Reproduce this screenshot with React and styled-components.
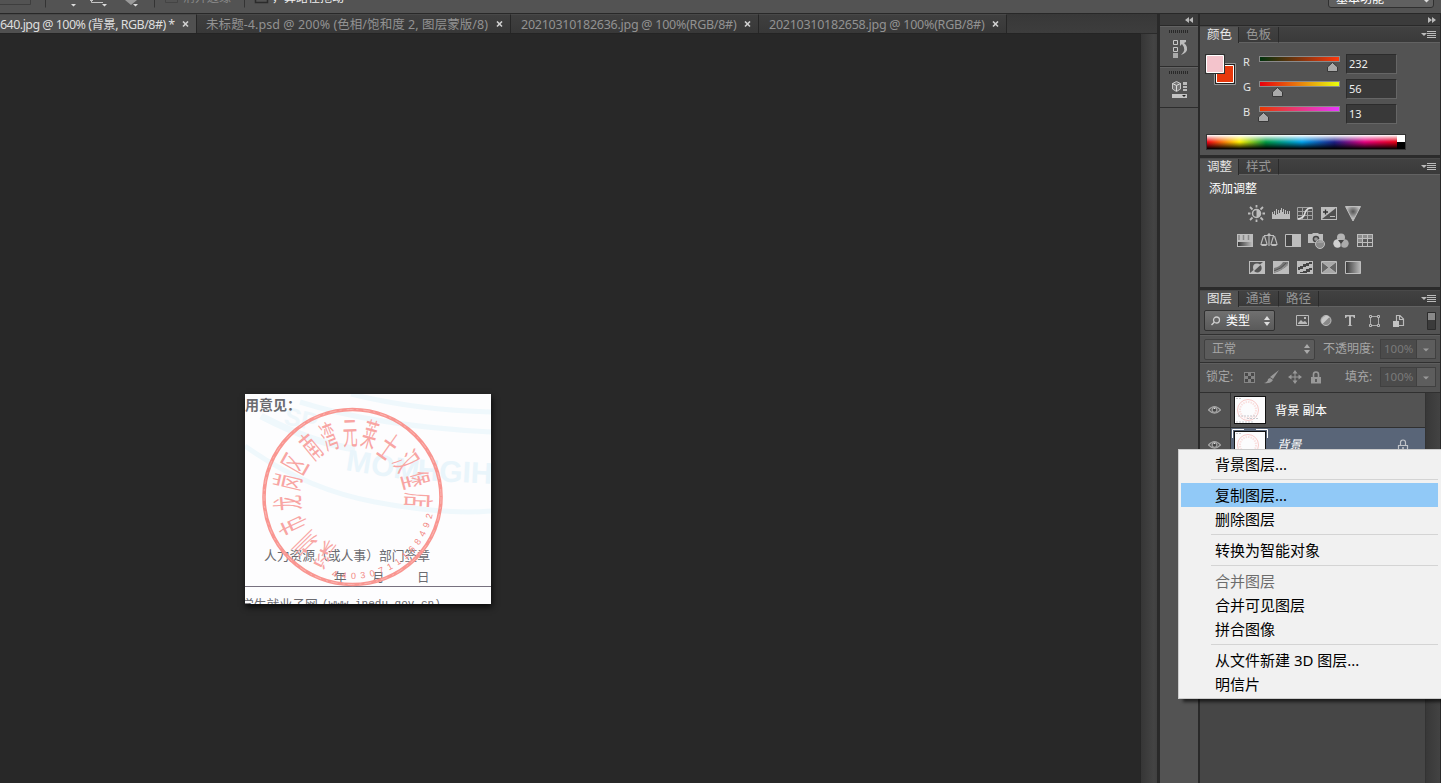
import React from "react";
import styled, { createGlobalStyle, css } from "styled-components";

const Global = createGlobalStyle`
  * { box-sizing: border-box; }
  body { margin: 0; background: #282828; overflow: hidden; font-family: "Noto Sans", "Noto Sans CJK SC", sans-serif; }
  svg { display: block; flex: none; }
`;

const App_ = styled.div`
  width: 1441px; height: 783px; overflow: hidden; position: relative;
  display: flex; flex-direction: column; background: #282828; white-space: nowrap;
`;
const OptionsBar = styled.div`
  height: 14px; flex: none; background: #535353; border-bottom: 1px solid #282828; overflow: hidden;
`;
const Workspace = styled.div`flex: 1; display: flex; min-height: 0;`;
const DocumentArea = styled.div`width: 1157px; display: flex; flex-direction: column;`;
const TabBar = styled.div`
  height: 19px; display: flex; background: linear-gradient(#383838, #3d3d3d);
`;
const DocTab = styled.div`
  width: ${(p) => p.$w}px; height: 19px; display: flex; align-items: center; justify-content: space-between;
  padding: 1px 7px 0 ${(p) => p.$pl}px; border-right: 1px solid #262626; border-top: 1px solid #484848;
  font-size: 12.5px; line-height: 16px; letter-spacing: ${(p) => p.$ls}px;
  color: ${(p) => (p.$active ? "#dedede" : "#929292")};
  background: ${(p) => (p.$active ? "#505050" : "linear-gradient(#3f3f3f,#383838)")};
`;
const Stage = styled.div`flex: 1; display: flex; min-height: 0;`;
const Canvas = styled.div`
  width: 1140px; background: #282828; padding: 360px 0 0 245px; border-top: 1px solid #242424;
  & > svg { box-shadow: 1px 3px 6px #0b0b0b; }
`;
const ScrollTrack = styled.div`
  width: 17px; background: linear-gradient(90deg, #363636, #444 80%, #404040); border-left: 1px solid #262626; border-top: 1px solid #2a2a2a;
`;
const IconDock = styled.div`
  width: 41px; background: #535353; border-left: 3px solid #292929; display: flex; flex-direction: column;
`;
const DockHeader = styled.div`
  height: 12px; flex: none; background: #3b3b3b; border-bottom: 1px solid #292929; display: flex; align-items: center;
  justify-content: flex-end; padding-right: ${(p) => p.$pr}px;
`;
const DockButton = styled.div`
  height: 41px; border-bottom: 1px solid #2d2d2d; border-top: 1px solid #626262; padding: 2px 0 0 8px;
`;
const Panels = styled.div`
  width: 243px; border-left: 2px solid #292929; border-right: 1px solid #292929; display: flex; flex-direction: column; background: #535353;
`;
const Panel = styled.div`
  height: 132px; flex: none; border-bottom: 3px solid #2b2b2b; display: flex; flex-direction: column; overflow: hidden;
`;
const PanelTabs = styled.div`
  height: 17px; flex: none; display: flex; background: linear-gradient(#414141, #393939); border-top: 1px solid #494949;
`;
const PanelTab = styled.div`
  width: ${(p) => p.$w || 39}px; padding-left: 7px; font-size: 12.5px; line-height: 15px; height: 16px;
  color: ${(p) => (p.$active ? "#e6e6e6" : "#969696")};
  background: ${(p) => (p.$active ? "#535353" : "transparent")};
  border-right: 1px solid #2a2a2a;
  border-bottom: ${(p) => (p.$active ? "0" : "1px solid #626262")};
`;
const TabFill = styled.div`flex: 1; border-bottom: 1px solid #626262; padding: 3px 4px 0 0; display: flex; justify-content: flex-end;`;
const ColorBody = styled.div`display: flex; padding: 11px 0 0 5px; height: 91px; flex: none;`;
const Sliders = styled.div`display: flex; flex-direction: column; padding-left: 7px;`;
const SliderRow = styled.div`
  height: 25px; display: flex; align-items: flex-start; font-size: 11px; line-height: 16px; color: #e4e4e4;
`;
const SliderLabel = styled.span`width: 16px;`;
const SliderTrack = styled.div`
  width: 81px; height: 6px; margin-top: 2px; border: 1px solid #8a8a8a;
  background: linear-gradient(90deg, ${(p) => p.$from}, ${(p) => p.$to});
`;
const Thumb = styled.svg`margin: 0 0 0 ${(p) => p.$x}px;`;
const NumberField = styled.div`
  width: 51px; height: 20px; margin: 0 0 0 6px; background: #393939; border: 1px solid #2c2c2c;
  border-bottom-color: #666; border-right-color: #666; padding: 0 0 0 2px; font-size: 11px; line-height: 17px; color: #eee;
`;
const Spectrum = styled.div`
  width: 200px; height: 16px; flex: none; margin: 0 0 0 6px; border: 1px solid #333; display: flex;
`;
const Hues = styled.div`
  flex: 1; background: linear-gradient(#fff, rgba(255,255,255,0) 50%, rgba(0,0,0,0) 50%, #000),
    linear-gradient(90deg, #f00014, #fff000 17%, #009944 31%, #00a0e9 50%, #1d2088 67%, #e4007f 83%, #e60012);
`;
const BlackWhite = styled.div`width: 8px; background: linear-gradient(#fff 50%, #000 50%);`;

const AdjustTitle = styled.div`font-size: 12px; line-height: 16px; color: #fff; padding: 6px 0 0 9px; height: 30px; flex: none;`;
const IconRow = styled.div`display: flex; gap: 6px; height: 27px; flex: none; padding-left: ${(p) => p.$pl}px;`;

const FilterRow = styled.div`
  height: 28px; flex: none; display: flex; align-items: center; padding: 0 4px; border-bottom: 1px solid #303030;
`;
const OptionRow = styled.div`
  height: ${(p) => p.$h}px; flex: none; display: flex; align-items: center; padding: 0 4px ${(p) => p.$pb || 0}px;
  border-top: 1px solid #5e5e5e; border-bottom: 1px solid #303030; font-size: 12px; color: #a6a6a6;
`;
const Select = styled.div`
  width: ${(p) => p.$w}px; height: 21px; border: 1px solid #303030; border-radius: 2px; display: flex; align-items: center;
  gap: 5px; padding: 0 4px 0 ${(p) => (p.$dim ? 7 : 6)}px; font-size: 12px; line-height: 18px; color: ${(p) => (p.$dim ? "#a6a6a6" : "#fff")};
  background: ${(p) => (p.$dim ? "#5b5b5b" : "linear-gradient(#707070,#5a5a5a)")};
  ${(p) => p.$dim && css`border-color: #404040;`}
  & > svg:last-child { margin-left: auto; }
`;
const FilterIcons = styled.div`flex: 1; display: flex; align-items: center; gap: 8px; padding-left: 19px;`;
const Label = styled.span`margin-left: ${(p) => p.$ml || 0}px; width: ${(p) => p.$w}px; line-height: 16px;`;
const PercentField = styled.div`
  width: 56px; height: 20px; display: flex; border: 1px solid #404040; color: #7a7a7a; font-size: 11.5px; line-height: 18px;
  background: #4b4b4b; padding-left: 3px; justify-content: space-between;
`;
const Drop = styled.div`width: 19px; border-left: 1px solid #404040; background: #5d5d5d; padding: 8px 0 0 6px;`;
const LockIcons = styled.div`display: flex; align-items: center; gap: 8px; width: 103px; padding-left: 1px;`;

const LayerArea = styled.div`flex: 1; display: flex; min-height: 0;`;
const LayerList = styled.div`width: 225px; background: #464646;`;
const LayerScroll = styled.div`flex: 1; background: linear-gradient(90deg, #383838, #434343); border-left: 1px solid #333;`;
const LayerRow = styled.div`
  height: 35px; display: flex; border-bottom: 1px solid #303030; background: #535353;
`;
const EyeCell = styled.div`width: 31px; border-right: 1px solid #333; padding: 11px 0 0 8px;`;
const LayerCell = styled.div`
  flex: 1; display: flex; align-items: center; padding-left: 1px; background: ${(p) => (p.$selected ? "#596578" : "#535353")};
`;
const LayerName = styled.span`
  flex: 1; margin-left: 7px; font-size: 12.2px; line-height: 18px; padding-top: 2px; color: #fff;
  ${(p) => p.$italic && css`font-style: italic; margin-left: 9px; padding-top: 0;`}
`;
const LockCell = styled.div`width: 28px; padding-top: 2px;`;

const Menu = styled.div`
  position: absolute; left: 1178px; top: 449px; width: 264px; height: 250px; background: #f1f1f1; border: 1px solid #ccc;
  padding: 2px 3px 2px 2px; box-shadow: 4px 4px 3px -1px rgba(0,0,0,.6);
`;
const MenuItem = styled.div`
  height: 24px; padding-left: 34px; font-size: 15px; line-height: 24px; color: ${(p) => (p.$off ? "#6d6d6d" : "#000")};
  background: ${(p) => (p.$hot ? "#91c9f7" : "transparent")};
`;
const MenuLine = styled.div`height: 7px; margin-left: 30px; padding-top: 3px; &::after { content: ""; display: block; height: 1px; background: #d4d4d4; }`;

const Close = () => (
  <svg width="7" height="7" viewBox="0 0 7 7"><path d="M1 .5L6 5.5M6 .5L1 5.5" stroke="#d0d0d0" strokeWidth="1.6" /></svg>
);
const Chevrons = ({ right }) => (
  <svg width="8" height="6" viewBox="0 0 8 6" fill="#b9b9b9">
    {right ? <path d="M0 0L4 3L0 6ZM4 0L8 3L4 6Z" /> : <path d="M4 0L0 3L4 6ZM8 0L4 3L8 6Z" />}
  </svg>
);
const PanelMenuIcon = () => (
  <svg width="15" height="9" viewBox="0 0 15 9"><path d="M0 3H6L3 6Z" fill="#bbb" /><path d="M6 1.500H15M6 3.500H15M6 5.500H15M6 7.500H15" stroke="#bbb" /></svg>
);
const UpDown = ({ c = "#ddd" }) => (
  <svg width="6" height="10" viewBox="0 0 6 10" fill={c}><path d="M3 0L6 4H0ZM3 10L6 6H0Z" /></svg>
);
const Eye = () => (
  <svg width="13" height="12" viewBox="0 0 13 12"><path d="M.5 6Q6.5 -1 12.5 6Q6.5 12 .5 6Z" fill="none" stroke="#a5a5a5" strokeWidth="1.2" /><circle cx="6.5" cy="5.8" r="3" fill="#a5a5a5" /><circle cx="6.5" cy="6" r="1.8" fill="#444" /><path d="M6 4H7V5H6Z" fill="#ddd" /></svg>
);
const Padlock = ({ c = "#999" }) => (
  <svg width="12" height="13" viewBox="0 0 12 13"><path d="M3.5 6V3.5a2.5 2.5 0 0 1 5 0V6" fill="none" stroke={c} strokeWidth="1.6" /><path d="M1 6H11V12.5H1Z" fill={c} /><path d="M6 8V11" stroke="#4d4d4d" strokeWidth="1.6" /></svg>
);
const LayerLock = () => (
  <svg width="12" height="15" viewBox="0 0 12 15"><path d="M3.500 6V3.500a2.500 2.500 0 0 1 5 0V6M1.500 6.500H10.500V14H1.500Z" fill="none" stroke="#c0c3c8" strokeWidth="1.200" /><path d="M6 8V12" stroke="#c0c3c8" strokeWidth="1.500" /></svg>
);

const ToolOptions = () => (
  <svg width="1441" height="13" viewBox="0 0 1441 13">
    <path d="M0 4.5H30.500V0" fill="none" stroke="#3e3e3e" />
    <path d="M45.500 0V7.500M154.500 0V7.500M244.500 0V7.500" stroke="#343434" />
    <path d="M71 4H76L73.500 6.500ZM102 4H107L104.500 6.500ZM133 4H138L135.500 6.500Z" fill="#ddd" />
    <path d="M91.500 0V2.500H103M90 .5H93" fill="none" stroke="#c4c4c4" />
    <path d="M125 0L131 5L137 0Z" fill="#999" />
    <path d="M165.500 0V2.500H177.500V0" fill="none" stroke="#444" />
    <path d="M255.500 0V2.500H267.500V0" fill="none" stroke="#2b2b2b" strokeWidth="1.500" />
    <text x="183" y="1.500" fontSize="12" fill="#888">消并边缘</text>
    <text x="272" y="1.500" fontSize="12" fill="#eee">，算路径拖动</text>
    <path d="M1328.500 0V5Q1328.500 7.500 1331 7.500H1431Q1433.500 7.500 1433.500 5V0" fill="#606060" stroke="#303030" />
    <text x="1336" y="2.500" fontSize="12" fill="#fff">基本功能</text>
    <path d="M1424 0H1429L1426.500 2.500Z" fill="#ddd" />
  </svg>
);

const HistoryIcon = () => (
  <svg width="22" height="33" viewBox="0 0 22 33">
    <path d="M1 2.500H21" stroke="#292929" strokeWidth="3" strokeDasharray="1 1" />
    <path d="M5.500 11.500H9.500V15.500H5.500ZM5.500 18.500H9.500V22.500H5.500Z" fill="none" stroke="#c8c8c8" />
    <path d="M5 24H10V29H5Z" fill="#aaa" />
    <path d="M12 11H18V13L16 14Q21 18 18 23Q16 25 13 26Q19 21 14 15L12 17Z" fill="#bcbcbc" />
  </svg>
);
const PropertiesIcon = () => (
  <svg width="24" height="33" viewBox="0 0 24 33">
    <path d="M1 2.500H21" stroke="#292929" strokeWidth="3" strokeDasharray="1 1" />
    <path d="M8.500 11.500L12.500 13.500V19L8.500 21.500L4.500 19V13.500Z" fill="#777" stroke="#c8c8c8" />
    <path d="M4.500 13.500L8.500 15.500L12.500 13.500M8.500 15.500V21" fill="none" stroke="#ddd" />
    <path d="M15 12H19V15H15ZM15 16H19V18H15ZM15 19H19V21H15Z" fill="#bbb" />
    <path d="M4 24H19V28H4Z" fill="#c4c4c4" /><path d="M14 25H18L16 27Z" fill="#222" />
  </svg>
);
const Swatches = () => (
  <svg width="31" height="32" viewBox="0 0 31 32">
    <path d="M9.500 9.500H30.500V30.500H9.500Z" fill="#202020" stroke="#969696" />
    <path d="M11.500 11.500H28.500V28.500H11.500Z" fill="#e8380d" stroke="#fff" />
    <path d="M0 0H20V20H0Z" fill="#303030" /><path d="M1.500 1.500H18.500V18.500H1.500Z" fill="#f4c4cc" stroke="#fff" />
  </svg>
);

const G = "#bdbdbd";
const D = "#444";
const adjustShapes = {
  sun: <><circle cx="8.500" cy="8.500" r="4" fill="none" stroke={G} strokeWidth="1.500" /><path d="M8.500 4.500A4 4 0 0 1 8.500 12.500Z" fill={G} /><path d="M8.500 0V2.500M8.500 14.500V17M0 8.500H2.500M14.500 8.500H17M2 2L4.500 4.500M12.500 12.500L15 15M15 2L12.500 4.500M2 15L4.500 12.500" stroke={G} strokeWidth="1.800" /></>,
  levels: <path d="M0 14V7H1V9H2V6H3V10H4V4H5V9H6V5H7V8H8V5H9V3H10V7H11V4H12V9H13V5H14V9H15V6H16V9H17V6H18V14Z" fill={G} />,
  curves: <><path d="M1.500 2.500H16.500V14.500H1.500ZM6.500 2V14M11.500 2V14M1 6.500H16M1 10.500H16" fill="none" stroke="#a2a2a2" /><path d="M2 14Q8 13 9 8T16 3" fill="none" stroke="#ddd" strokeWidth="1.500" /></>,
  exposure: <><path d="M1 2H17V15H1Z" fill={G} /><path d="M2 14L16 3V14Z" fill="#505050" /><path d="M3 7H8M5.500 4.500V9.500" stroke="#333" strokeWidth="1.300" /><path d="M10 11.500H15" stroke={G} /></>,
  vibrance: <><defs><radialGradient id="v" cy=".35"><stop stopColor="#555" /><stop offset="1" stopColor="#c4c4c4" /></radialGradient></defs><path d="M1.500 1.500H16.500L9 16Z" fill="url(#v)" stroke={G} /></>,
  hue: <><path d="M1 2H17V15H1Z" fill={G} /><path d="M3 3V8M7.500 3V8M12.500 3V8" stroke="#888" strokeWidth="1.500" /><path d="M2 10H16V14H2Z" fill="url(#g)" /></>,
  balance: <path d="M9 1V14M4 3.500H14M7.500 2.500H10.500M3.500 4L1 12M4.500 4L7 12M13.500 4L11 12M14.500 4L17 12M0.500 12.500H7.500M10.500 12.500H17.500M1.500 13.500H6.500M11.500 13.500H16.500" fill="none" stroke={G} strokeWidth="1.100" />,
  bw: <><path d="M1.500 2.500H16.500V14.500H1.500Z" fill={D} stroke={G} /><path d="M8 2H17V15H8Z" fill={G} /></>,
  photo: <><path d="M0 2H4L5 1H10L11 2H15V11H0Z" fill={G} /><circle cx="8" cy="7" r="2.600" fill="#999" stroke={D} strokeWidth="1.500" /><circle cx="12" cy="12" r="4.500" fill="#999" fillOpacity=".8" stroke="#c0c0c0" /></>,
  mixer: <><circle cx="9" cy="5.500" r="4" fill="#b4b4b4" /><circle cx="5.500" cy="11.500" r="4.200" fill="#d0d0d0" /><circle cx="12.500" cy="11.500" r="4.200" fill="#aaa" /><path d="M6 8H12L9 12Z" fill={D} /><path d="M9 11V15" stroke="#777" /></>,
  lookup: <><path d="M1 2H17V15H1Z" fill={G} /><path d="M2 3H6V6H2ZM7 3H11V6H7ZM12 3H16V6H12ZM2 7H6V10H2Z" fill="#8b8b8b" /><path d="M7 7H11V10H7ZM12 7H16V10H12ZM2 11H6V14H2ZM7 11H11V14H7ZM12 11H16V14H12Z" fill="#595959" /></>,
  invert: <><path d="M1 2H17V15H1Z" fill={G} /><path d="M2 3H15L2 14Z" fill="#555" /><circle cx="9" cy="8.500" r="4" fill={G} /><path d="M6 12A4 4 0 0 0 12.500 6Z" fill="#555" /></>,
  poster: <><path d="M1 2H17V15H1Z" fill={G} /><path d="M2 9Q8 8 11 3H16V6Q11 11 2 14Z" fill="#777" /><path d="M2 12Q9 10 14 4" fill="none" stroke="#555" /><path d="M2 13Q10 11 16 5" fill="none" stroke="#999" /></>,
  threshold: <><path d="M1 2H17V15H1Z" fill={G} /><path d="M2 8H4V7H7V5H10V4H13V3H16V5H13V7H10V8H7V10H4V11H2ZM4 14V13H7V12H10V10H13V9H16V11H14V13H11V14Z" fill={D} /></>,
  selective: <><path d="M1.500 2.500H16.500V14.500H1.500Z" fill="#666" stroke={G} /><path d="M2 3H16L9 8.500ZM2 14H16L9 8.500Z" fill="#a8a8a8" /><path d="M2 3L16 14M16 3L2 14" stroke={G} strokeWidth=".8" /></>,
  map: <path d="M1.500 2.500H16.500V14.500H1.500Z" fill="url(#g)" stroke={G} />,
};
const AdjustIcon = ({ name }) => (
  <svg width="18" height="17" viewBox="0 0 18 17">
    <defs><linearGradient id="g"><stop stopColor="#383838" /><stop offset="1" stopColor="#bbb" /></linearGradient></defs>
    {adjustShapes[name]}
  </svg>
);
const adjustRows = [
  [48, ["sun", "levels", "curves", "exposure", "vibrance"]],
  [36, ["hue", "balance", "bw", "photo", "mixer", "lookup"]],
  [48, ["invert", "poster", "threshold", "selective", "map"]],
];

const filterShapes = [
  <><path d="M2.500 2.500H14.500V12.500H2.500Z" fill="none" stroke="#b9b9b9" /><path d="M4 10L7 7L9 9L11 8L13 10V11H4ZM10 4H12V6H10Z" fill="#b9b9b9" /></>,
  <><circle cx="8" cy="7.500" r="5" fill="#888" stroke="#bbb" /><path d="M4.500 11A5 5 0 0 1 11.500 4Z" fill="#c8c8c8" /></>,
  <path d="M3 2H13V5H12L11 3.500H9V12L10.500 13H5.500L7 12V3.500H5L4 5H3Z" fill="#bdbdbd" />,
  <><path d="M4.500 3.500H12.500V12.500H4.500Z" fill="none" stroke="#aaa" /><path d="M3.500 2.500H5.500V4.500H3.500ZM11.500 2.500H13.500V4.500H11.500ZM3.500 11.500H5.500V13.500H3.500ZM11.500 11.500H13.500V13.500H11.500Z" fill="#535353" stroke="#bbb" /></>,
  <><path d="M6.500 8V2.500H10L13.500 6V12.500H9M9.500 3V6.500H13" fill="none" stroke="#bbb" strokeWidth="1.200" /><path d="M3 8H9V14H3Z" fill="#c4c4c4" /></>,
];

const sealName = [
  ["深", 80, 160], ["圳", 61, 149], ["市", 48, 131], ["龙", 43, 109], ["岗", 43, 88], ["区", 50, 70], ["南", 66, 53],
  ["湾", 84, 43], ["元", 105, 39], ["莱", 125, 41], ["士", 143, 53], ["汉", 161, 67], ["堡", 170, 86], ["店", 173, 106],
];
const sealDigits = "44030711168492".split("");
const turn = (x, y) => (Math.atan2(x - 107.5, 103 - y) * 180) / Math.PI;

const SealArt = () => (
  <>
    <ellipse cx="107.500" cy="103" rx="88.500" ry="87.500" fill="none" stroke="#f99691" strokeWidth="3.600" />
    <ellipse cx="107.500" cy="103" rx="88.500" ry="87.500" fill="none" stroke="#fbb6b2" strokeWidth="1" strokeDasharray="7 3 2 5" />
    {sealName.map(([c, x, y]) => (
      <text key={c} transform={`translate(${x} ${y}) rotate(${turn(x, y)}) scale(.86 1.900)`} y="6.200" textAnchor="middle" fontSize="17" fill="#f8a5a3" fontFamily="'Noto Sans CJK SC', sans-serif">{c}</text>
    ))}
    {sealDigits.map((c, i) => {
      const a = 103 - i * 6.85;
      return <text key={i} transform={`translate(107.500 103) rotate(${a - 90}) translate(0 82)`} textAnchor="middle" fontSize="9" fill="#f28783" fontFamily="Liberation Sans, sans-serif">{c}</text>;
    })}
  </>
);

const ScannedPage = () => (
  <svg width="246" height="210" viewBox="0 0 246 210">
    <path d="M0 0H246V210H0Z" fill="#fdfdfe" />
    <g fill="none" stroke="#eff8fc" strokeWidth="5">
      <path d="M0 52Q60 95 130 108T246 117" /><path d="M55 8Q130 32 246 38" /><path d="M106 0Q170 16 246 18" /><path d="M16 22Q70 50 110 55" strokeWidth="7" />
    </g>
    <g fill="#e9f5fb" fontFamily="Liberation Sans, sans-serif" fontWeight="700">
      <text transform="translate(100 76) rotate(9)" fontSize="30">MOM</text>
      <text transform="translate(172 86) rotate(3)" fontSize="30">HGIH</text>
      <text transform="translate(38 30) rotate(12)" fontSize="25" opacity=".7">SP</text>
    </g>
    <g fontFamily="'Noto Sans CJK SC', serif" fill="#6b6b70">
      <text x="0" y="16" fontSize="14" fontWeight="700">用意见：</text>
      <text x="19" y="166" fontSize="12.800" fontFamily="'Liberation Serif','Noto Sans CJK SC',serif" textLength="166">人力资源（或人事）部门签章</text>
      <text x="89" y="188" fontSize="12.500">年</text><text x="127" y="188" fontSize="12.500">月</text><text x="172" y="188" fontSize="12.500">日</text>
      <text x="-4" y="215" fontSize="12.800">学生就业子网</text>
      <text x="77" y="213" fontSize="11" fontFamily="Liberation Mono, monospace">(www.inedu.gov.cn)</text>
    </g>
    <path d="M0 192.500H246" stroke="#77717f" />
    <SealArt />
  </svg>
);

const Thumbnail = ({ marked }) => (
  <svg width="36" height="34" viewBox="0 0 36 34">
    <path d="M2 3H34V31H2Z" fill="#111" /><path d="M3 4H33V30H3Z" fill="#fcfcfd" />
    <ellipse cx="16" cy="17" rx="10.500" ry="10.500" fill="none" stroke="#f8cbca" />
    <ellipse cx="16" cy="17" rx="8" ry="8" fill="none" stroke="#fae1e0" strokeWidth="2" strokeDasharray="1.500 1" />
    <path d="M4 5.500H9M6 23H25M15 25.500H26M4 29H22" stroke="#c9c9ce" strokeDasharray="2 1" />
    {marked && <path d="M.5 10V1.500H12M24 1.500H35.500V10" fill="none" stroke="#fff" />}
  </svg>
);

const docTabs = [
  ["640.jpg @ 100% (背景, RGB/8#) *", 197, 0, -0.54, true],
  ["未标题-4.psd @ 200% (色相/饱和度 2, 图层蒙版/8)", 314, 9, 0.07],
  ["20210310182636.jpg @ 100%(RGB/8#)", 248, 10, -0.26],
  ["20210310182658.jpg @ 100%(RGB/8#)", 248, 10, -0.26],
];
const channels = [
  ["R", "232", "#00320d", "#ff380d", 69], ["G", "56", "#e8000d", "#e8ff0d", 14], ["B", "13", "#e83800", "#e838ff", 0],
];

const PanelHead = ({ tabs }) => (
  <PanelTabs>{tabs.map((t, i) => <PanelTab key={t} $active={i === 0} $w={i === 0 ? 39 : 40}>{t}</PanelTab>)}<TabFill><PanelMenuIcon /></TabFill></PanelTabs>
);
const Percent = () => (
  <PercentField>100%<Drop><svg width="6" height="4" viewBox="0 0 6 4"><path d="M0 .5H6L3 3.500Z" fill="#999" /></svg></Drop></PercentField>
);

export default function App() {
  return (
    <App_>
      <Global />
      <OptionsBar><ToolOptions /></OptionsBar>
      <Workspace>
        <DocumentArea>
          <TabBar>{docTabs.map(([t, w, pl, ls, on]) => <DocTab key={t} $w={w} $pl={pl} $ls={ls} $active={on}>{t}<Close /></DocTab>)}</TabBar>
          <Stage><Canvas><ScannedPage /></Canvas><ScrollTrack /></Stage>
        </DocumentArea>
        <IconDock>
          <DockHeader $pr={5}><Chevrons /></DockHeader>
          <DockButton><HistoryIcon /></DockButton>
          <DockButton><PropertiesIcon /></DockButton>
        </IconDock>
        <Panels>
          <DockHeader $pr={4}><Chevrons right /></DockHeader>
          <Panel>
            <PanelHead tabs={["颜色", "色板"]} />
            <ColorBody>
              <Swatches />
              <Sliders>
                {channels.map(([n, v, a, b, x]) => (
                  <SliderRow key={n}>
                    <SliderLabel>{n}</SliderLabel>
                    <div><SliderTrack $from={a} $to={b} /><Thumb $x={x - 1} width="11" height="10" viewBox="0 0 11 10"><path d="M.5 9.500V5L5.500 .5L10.500 5V9.500Z" fill="#aaa" stroke="#383838" /></Thumb></div>
                    <NumberField>{v}</NumberField>
                  </SliderRow>
                ))}
              </Sliders>
            </ColorBody>
            <Spectrum><Hues /><BlackWhite /></Spectrum>
          </Panel>
          <Panel>
            <PanelHead tabs={["调整", "样式"]} />
            <AdjustTitle>添加调整</AdjustTitle>
            {adjustRows.map(([pl, names]) => <IconRow key={names[0]} $pl={pl}>{names.map((n) => <AdjustIcon key={n} name={n} />)}</IconRow>)}
          </Panel>
          <PanelHead tabs={["图层", "通道", "路径"]} />
          <FilterRow>
            <Select $w={71}>
              <svg width="10" height="10" viewBox="0 0 10 10"><circle cx="5.500" cy="4" r="3" fill="none" stroke="#ccc" strokeWidth="1.300" /><path d="M3.500 6L.5 9" stroke="#ccc" strokeWidth="1.500" /></svg>
              类型<UpDown />
            </Select>
            <FilterIcons>{filterShapes.map((s, i) => <svg key={i} width="16" height="16" viewBox="0 0 16 16">{s}</svg>)}</FilterIcons>
            <svg width="9" height="18" viewBox="0 0 9 18"><path d="M.5 .5H8.500V17.500H.5Z" fill="#3b3b3b" stroke="#2c2c2c" /><path d="M1 1H8V8H1Z" fill="#888" /></svg>
          </FilterRow>
          <OptionRow $h={28}><Select $dim $w={111}>正常<UpDown c="#aaa" /></Select><Label $ml={8} $w={57}>不透明度:</Label><Percent /></OptionRow>
          <OptionRow $h={30} $pb={2}>
            <Label $ml={2} $w={36}>锁定:</Label>
            <LockIcons>
              <svg width="13" height="13" viewBox="0 0 13 13"><path d="M1 1H12V12H1Z" fill="#858585" /><path d="M2 2H5V5H2ZM8 2H11V5H8ZM5 5H8V8H5ZM2 8H5V11H2ZM8 8H11V11H8Z" fill="#484848" /></svg>
              <svg width="16" height="14" viewBox="0 0 16 14"><path d="M15 0L9 9L6 7Z" fill="#999" /><path d="M6 8L9 10Q7 14 0 13Q4 12 4 9Z" fill="#999" /></svg>
              <svg width="14" height="14" viewBox="0 0 14 14"><path d="M7 2V12M2 7H12" stroke="#999" /><path d="M7 0L9.500 3.500H4.500ZM7 14L9.500 10.500H4.500ZM0 7L3.500 4.500V9.500ZM14 7L10.500 4.500V9.500Z" fill="#999" /></svg>
              <Padlock />
            </LockIcons>
            <Label $w={35}>填充:</Label><Percent />
          </OptionRow>
          <LayerArea>
            <LayerList>
              <LayerRow><EyeCell><Eye /></EyeCell><LayerCell><Thumbnail /><LayerName>背景 副本</LayerName></LayerCell></LayerRow>
              <LayerRow><EyeCell><Eye /></EyeCell><LayerCell $selected><Thumbnail marked /><LayerName $italic>背景</LayerName><LockCell><LayerLock /></LockCell></LayerCell></LayerRow>
            </LayerList>
            <LayerScroll />
          </LayerArea>
        </Panels>
      </Workspace>
      <Menu>
        <MenuItem>背景图层...</MenuItem><MenuLine />
        <MenuItem $hot>复制图层...</MenuItem><MenuItem>删除图层</MenuItem><MenuLine />
        <MenuItem>转换为智能对象</MenuItem><MenuLine />
        <MenuItem $off>合并图层</MenuItem><MenuItem>合并可见图层</MenuItem><MenuItem>拼合图像</MenuItem><MenuLine />
        <MenuItem>从文件新建 3D 图层...</MenuItem><MenuItem>明信片</MenuItem>
      </Menu>
    </App_>
  );
}
